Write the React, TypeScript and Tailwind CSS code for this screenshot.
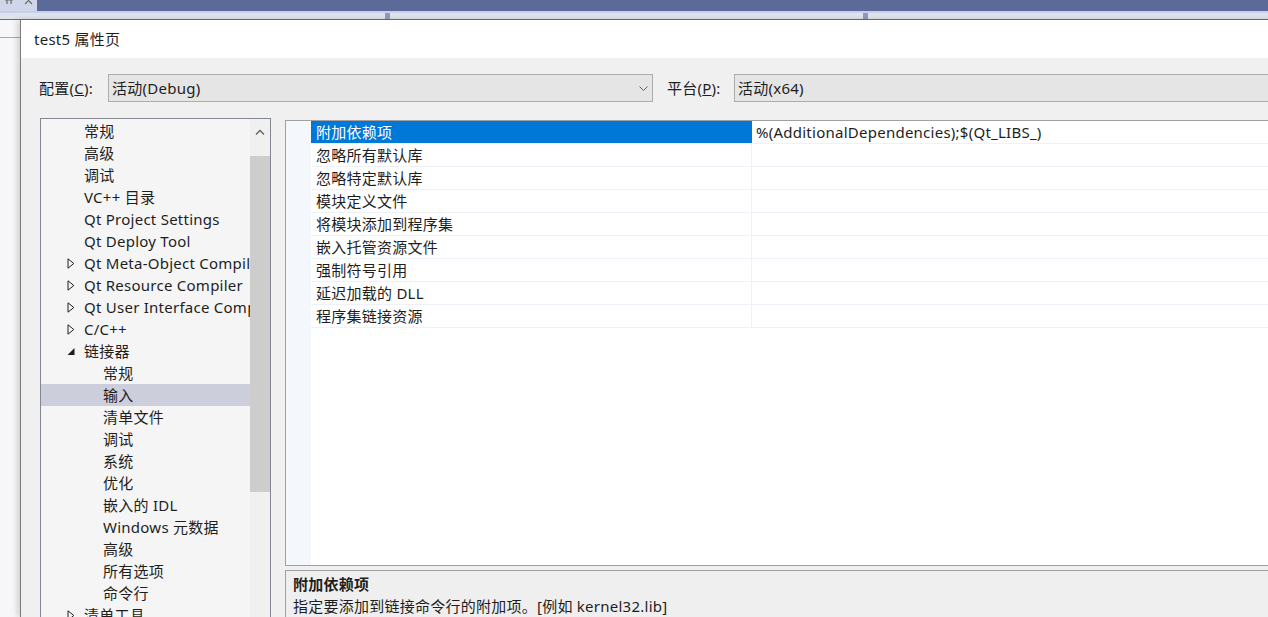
import React from "react";

const FONT = '"Noto Sans", "Noto Sans CJK SC", sans-serif';

type TreeItem = { label: string; level: 0 | 1; arrow?: "closed" | "open"; selected?: boolean };

const treeItems: TreeItem[] = [
  { label: "常规", level: 0 },
  { label: "高级", level: 0 },
  { label: "调试", level: 0 },
  { label: "VC++ 目录", level: 0 },
  { label: "Qt Project Settings", level: 0 },
  { label: "Qt Deploy Tool", level: 0 },
  { label: "Qt Meta-Object Compiler", level: 0, arrow: "closed" },
  { label: "Qt Resource Compiler", level: 0, arrow: "closed" },
  { label: "Qt User Interface Compiler", level: 0, arrow: "closed" },
  { label: "C/C++", level: 0, arrow: "closed" },
  { label: "链接器", level: 0, arrow: "open" },
  { label: "常规", level: 1 },
  { label: "输入", level: 1, selected: true },
  { label: "清单文件", level: 1 },
  { label: "调试", level: 1 },
  { label: "系统", level: 1 },
  { label: "优化", level: 1 },
  { label: "嵌入的 IDL", level: 1 },
  { label: "Windows 元数据", level: 1 },
  { label: "高级", level: 1 },
  { label: "所有选项", level: 1 },
  { label: "命令行", level: 1 },
  { label: "清单工具", level: 0, arrow: "closed" },
];

const props = [
  { name: "附加依赖项", value: "%(AdditionalDependencies);$(Qt_LIBS_)", selected: true },
  { name: "忽略所有默认库", value: "" },
  { name: "忽略特定默认库", value: "" },
  { name: "模块定义文件", value: "" },
  { name: "将模块添加到程序集", value: "" },
  { name: "嵌入托管资源文件", value: "" },
  { name: "强制符号引用", value: "" },
  { name: "延迟加载的 DLL", value: "" },
  { name: "程序集链接资源", value: "" },
];

const Chevron = ({ up = false }: { up?: boolean }) => (
  <svg width="10" height="6" viewBox="0 0 10 6" className="shrink-0">
    <path
      d={up ? "M1 5.5 L5 1.5 L9 5.5" : "M1 0.5 L5 4.5 L9 0.5"}
      fill="none"
      stroke="currentColor"
      strokeWidth="1.3"
    />
  </svg>
);

const Combo = ({ value, className }: { value: string; className: string }) => (
  <div
    className={`h-[28px] flex items-center justify-between bg-[#e5e5e5] border border-[#adadad] pl-[3px] pr-[4px] ${className}`}
  >
    <span>{value}</span>
    <span className="text-[#606060]">
      <svg width="9" height="5" viewBox="0 0 9 5">
        <path d="M0.5 0.5 L4.5 4.5 L8.5 0.5" fill="none" stroke="currentColor" strokeWidth="1" />
      </svg>
    </span>
  </div>
);

function Arrow({ kind }: { kind?: "closed" | "open" }) {
  if (kind === "closed")
    return (
      <svg width="8" height="11" viewBox="0 0 8 11">
        <path d="M1 0.8 L6.8 5.5 L1 10.2 Z" fill="none" stroke="#1e1e1e" strokeWidth="1" />
      </svg>
    );
  if (kind === "open")
    return (
      <svg width="8" height="11" viewBox="0 0 8 11">
        <path d="M0.5 9 L7.5 9 L7.5 2 Z" fill="#1e1e1e" />
      </svg>
    );
  return null;
}

export default function App() {
  return (
    <div
      className="w-[1268px] h-[617px] overflow-hidden flex flex-col bg-white text-[15px] tracking-[0.25px] text-[#1e1e1e]"
      style={{ fontFamily: FONT }}
    >
      {/* IDE behind the dialog */}
      <div className="h-[11px] flex shrink-0">
        <div className="w-[37px] bg-[#cfd6ea] flex items-start gap-[11px] pl-[5px] text-[#6a6a6a]">
          <svg width="8" height="5" viewBox="0 0 8 5">
            <path d="M0 0 H8 M2 0 V4 M6 0 V4" stroke="currentColor" strokeWidth="1.2" fill="none" />
          </svg>
          <svg width="9" height="5" viewBox="0 0 9 5">
            <path d="M1 -3 L8 4 M8 -3 L1 4" stroke="currentColor" strokeWidth="1.2" fill="none" />
          </svg>
        </div>
        <div className="flex-1 bg-[#5c6a97]" />
      </div>
      <div className="h-[9px] shrink-0 flex border-t-2 border-[#c8cef0] border-b border-b-[#6e6e6e] bg-[#e1e3ea]">
        <div className="w-[385px]" />
        <div className="w-[5px] bg-[#8f9bbd]" />
        <div className="w-[473px]" />
        <div className="w-[5px] bg-[#8f9bbd]" />
        <div className="flex-1" />
      </div>

      <div className="flex flex-1 min-h-0">
        <div className="w-[20px] shrink-0 bg-[#f7f7fa] flex flex-col">
          <div className="h-[18px] border-b border-[#a5a9b5]" />
        </div>

        {/* dialog */}
        <div className="w-[1300px] shrink-0 flex flex-col border-l border-[#7a7a7a] shadow-[-3px_0_6px_rgba(0,0,0,0.15)]">
          <div className="h-[38px] shrink-0 bg-white flex items-center pl-[13px]">test5 属性页</div>

          <div className="flex-1 bg-[#f0f0f0] flex flex-col">
            <div className="flex items-center pt-[16px] pl-[18px]">
              <span className="w-[69px] shrink-0">
                配置(<span className="underline">C</span>):
              </span>
              <Combo value="活动(Debug)" className="w-[545px]" />
              <span className="ml-[14px] w-[67px] shrink-0">
                平台(<span className="underline">P</span>):
              </span>
              <Combo value="活动(x64)" className="w-[560px]" />
            </div>

            <div className="flex mt-[16px] pl-[19px] gap-[14px] flex-1 min-h-0">
              {/* tree */}
              <div className="w-[231px] h-[520px] shrink-0 flex border border-[#828790] bg-[#f5f5f5]">
                <div className="w-[209px] pt-[1px] flex flex-col">
                  {treeItems.map((it, i) => (
                    <div
                      key={i}
                      className={`h-[22px] shrink-0 flex items-center whitespace-nowrap overflow-hidden ${
                        it.selected ? "bg-[#cccedb]" : ""
                      } ${it.level === 0 ? "pl-[26px]" : "pl-[62px]"}`}
                    >
                      {it.level === 0 && (
                        <span className="w-[17px] shrink-0 flex items-center">
                          <Arrow kind={it.arrow} />
                        </span>
                      )}
                      <span>{it.label}</span>
                    </div>
                  ))}
                </div>
                <div className="w-[20px] bg-[#f0f0f0] flex flex-col">
                  <div className="h-[37px] flex items-start justify-center pt-[10px] text-[#606060]">
                    <Chevron up />
                  </div>
                  <div className="h-[336px] bg-[#cdcdcd]" />
                  <div className="flex-1" />
                  <div className="h-[22px] flex items-start justify-center pt-[7px] text-[#606060]">
                    <Chevron />
                  </div>
                </div>
              </div>

              {/* property grid + description */}
              <div className="flex-1 flex flex-col pt-[2px]">
                <div className="h-[446px] shrink-0 border border-[#a0a0a0] bg-white flex">
                  <div className="w-[25px] shrink-0 bg-[#f4f7fc]" />
                  <div className="flex-1 flex flex-col">
                    {props.map((p, i) => (
                      <div key={i} className="h-[23px] flex border-b border-[#eef2f8]">
                        <div
                          className={`w-[440px] shrink-0 flex items-center pl-[5px] ${
                            p.selected ? "bg-[#0078d7] text-white" : ""
                          }`}
                        >
                          {p.name}
                        </div>
                        <div
                          className={`flex-1 flex items-center pl-[4px] border-l ${
                            p.selected ? "border-[#0078d7]" : "border-[#eef2f8]"
                          }`}
                        >
                          {p.value}
                        </div>
                      </div>
                    ))}
                  </div>
                </div>
                <div className="mt-[4px] flex-1 border-t border-l border-[#a0a0a0] bg-[#efefef] pl-[7px] pt-[2px]">
                  <div className="h-[22px] flex items-center font-bold">附加依赖项</div>
                  <div className="h-[23px] flex items-center">指定要添加到链接命令行的附加项。[例如 kernel32.lib]</div>
                </div>
              </div>
            </div>
          </div>
        </div>
      </div>
    </div>
  );
}
